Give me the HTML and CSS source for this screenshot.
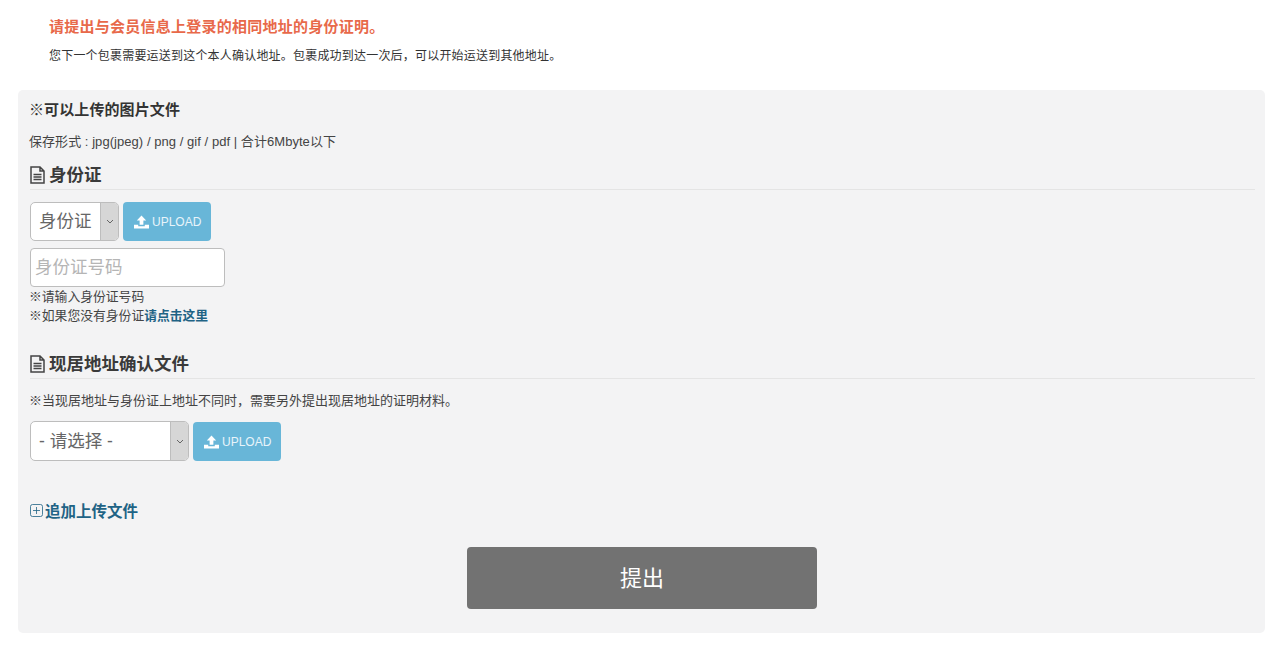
FILE: index.html
```html
<!DOCTYPE html>
<html lang="zh-CN">
<head>
    <meta charset="UTF-8">
    <title>身份证明</title>
    <link rel="stylesheet" href="styles.css">
</head>
<body>
<header class="intro">
    <h1>请提出与会员信息上登录的相同地址的身份证明。</h1>
    <p>您下一个包裹需要运送到这个本人确认地址。包裹成功到达一次后，可以开始运送到其他地址。</p>
</header>

<main class="panel">
    <h3 class="files-title">※可以上传的图片文件</h3>
    <p class="files-note">保存形式 : jpg(jpeg) / png / gif / pdf | 合计6Mbyte以下</p>

    <h2 class="section-title">
        <svg class="doc-icon" viewBox="0 0 16 18"><path d="M1.5 1h9l4 4v12h-13zM10.5 1v4h4M4 8.5h8M4 11h8M4 13.5h8" fill="none" stroke="#444" stroke-width="1.5"/></svg>
        身份证
    </h2>
    <div class="upload-row">
        <div class="select select-short">
            <span class="select-value">身份证</span>
            <span class="select-arrow"><svg viewBox="0 0 8 5"><path d="M1 1l3 3 3-3" fill="none" stroke="#666"/></svg></span>
        </div>
        <button class="btn-upload">
            <svg class="upload-icon" viewBox="0 0 16 14"><path d="M8 0l5 5.500H10V10H6V5.500H3zM0 10h4.500v1.500h7V10H16v4H0z" fill="#fff"/></svg>
            UPLOAD
        </button>
    </div>
    <div class="text-input">身份证号码</div>
    <p class="hint hint-first">※请输入身份证号码</p>
    <p class="hint hint-second">※如果您没有身份证<a href="#">请点击这里</a></p>

    <h2 class="section-title section-address">
        <svg class="doc-icon" viewBox="0 0 16 18"><path d="M1.5 1h9l4 4v12h-13zM10.5 1v4h4M4 8.5h8M4 11h8M4 13.5h8" fill="none" stroke="#444" stroke-width="1.5"/></svg>
        现居地址确认文件
    </h2>
    <p class="address-note">※当现居地址与身份证上地址不同时，需要另外提出现居地址的证明材料。</p>
    <div class="upload-row upload-row-address">
        <div class="select select-wide">
            <span class="select-value">- 请选择 -</span>
            <span class="select-arrow"><svg viewBox="0 0 8 5"><path d="M1 1l3 3 3-3" fill="none" stroke="#666"/></svg></span>
        </div>
        <button class="btn-upload">
            <svg class="upload-icon" viewBox="0 0 16 14"><path d="M8 0l5 5.500H10V10H6V5.500H3zM0 10h4.500v1.500h7V10H16v4H0z" fill="#fff"/></svg>
            UPLOAD
        </button>
    </div>

    <a class="add-file" href="#">
        <svg class="plus-icon" viewBox="0 0 13 13"><path d="M2.500.5h8a2 2 0 0 1 2 2v8a2 2 0 0 1-2 2h-8a2 2 0 0 1-2-2v-8a2 2 0 0 1 2-2zM3 6.500h7M6.500 3v7" fill="none" stroke="#1f6385" stroke-width=".8"/></svg>
        追加上传文件
    </a>

    <div class="submit-row">
        <button class="btn-submit">提出</button>
    </div>
</main>
</body>
</html>
```

FILE: styles.css
```css
* {
    margin: 0;
    padding: 0;
    box-sizing: border-box;
}
body {
    font-family: "Liberation Sans", "Noto Sans CJK SC", sans-serif;
    color: #333;
    background: #fff;
    height: 661px;
    overflow: hidden;
}
.intro {
    padding: 17px 0 0 49px;
    height: 90px;
}
.intro h1 {
    font-size: 15px;
    line-height: 20px;
    letter-spacing: 0.25px;
    font-weight: bold;
    color: #e8694a;
}
.intro p {
    font-size: 12px;
    line-height: 16px;
    letter-spacing: 0.2px;
    margin-top: 11px;
    color: #333;
}
.panel {
    margin: 0 15px 0 18px;
    height: 543px;
    padding: 10px 10px 0 12px;
    background: #f3f3f4;
    border-radius: 5px;
}
.files-title {
    font-size: 15px;
    line-height: 20px;
    letter-spacing: 0.1px;
    font-weight: bold;
    color: #333;
    margin-left: -1px;
}
.files-note {
    font-size: 13px;
    line-height: 16px;
    letter-spacing: 0.05px;
    margin-top: 14px;
    margin-left: -1px;
    color: #444;
}
.section-title {
    display: flex;
    align-items: center;
    gap: 3px;
    font-size: 17.5px;
    line-height: 24px;
    height: 30px;
    margin-top: 10px;
    font-weight: bold;
    color: #3a3a3a;
    border-bottom: 1px solid #e4e4e4;
}
.doc-icon {
    width: 17px;
    height: 18px;
    margin-left: -1px;
}
.upload-row {
    display: flex;
    gap: 4px;
    margin-top: 12px;
}
.select {
    display: flex;
    height: 39px;
    background: #fff;
    border: 1px solid #bdbdbd;
    border-radius: 5px;
    overflow: hidden;
    font-size: 17.5px;
    color: #666;
}
.select-short { width: 89px; }
.select-wide {
    width: 159px;
    height: 40px;
}
.select-value {
    flex: 1;
    padding-left: 8px;
    line-height: 36px;
}
.select-wide .select-value { line-height: 38px; }
.select-arrow {
    display: flex;
    align-items: center;
    justify-content: center;
    width: 18px;
    background: #d6d6d6;
    border-left: 1px solid #bdbdbd;
}
.select-arrow svg {
    width: 8px;
    height: 5px;
}
.btn-upload {
    display: flex;
    align-items: center;
    gap: 3px;
    height: 39px;
    padding: 0 10px 0 11px;
    background: #68b6d8;
    border: none;
    border-radius: 4px;
    color: #e8f4fa;
    font-family: inherit;
    font-size: 12px;
}
.upload-row-address .btn-upload { margin-top: 1px; }
.upload-icon {
    width: 15px;
    height: 14px;
}
.text-input {
    width: 195px;
    height: 39px;
    margin-top: 7px;
    padding-left: 4px;
    background: #fff;
    border: 1px solid #bdbdbd;
    border-radius: 4px;
    font-size: 17.5px;
    line-height: 37px;
    color: #b5b5b5;
}
.hint {
    font-size: 12.8px;
    line-height: 16px;
    color: #444;
    margin-left: -1px;
}
.hint-first { margin-top: 2px; }
.hint-second { margin-top: 3px; }
.hint a {
    color: #1f6385;
    font-weight: bold;
    text-decoration: none;
}
.section-address { margin-top: 25px; }
.address-note {
    font-size: 13px;
    line-height: 16px;
    margin-top: 14px;
    margin-left: -1px;
    color: #444;
}
.add-file {
    display: flex;
    align-items: center;
    gap: 2px;
    margin-top: 38px;
    height: 22px;
    font-size: 15.5px;
    font-weight: bold;
    color: #1f6385;
    text-decoration: none;
}
.plus-icon {
    width: 13px;
    height: 13px;
}
.submit-row {
    display: flex;
    padding-left: 437px;
    margin-top: 26px;
}
.btn-submit {
    width: 350px;
    height: 62px;
    padding-bottom: 4px;
    background: #727272;
    border: none;
    border-radius: 4px;
    color: #fff;
    font-family: inherit;
    font-size: 22px;
}
```
